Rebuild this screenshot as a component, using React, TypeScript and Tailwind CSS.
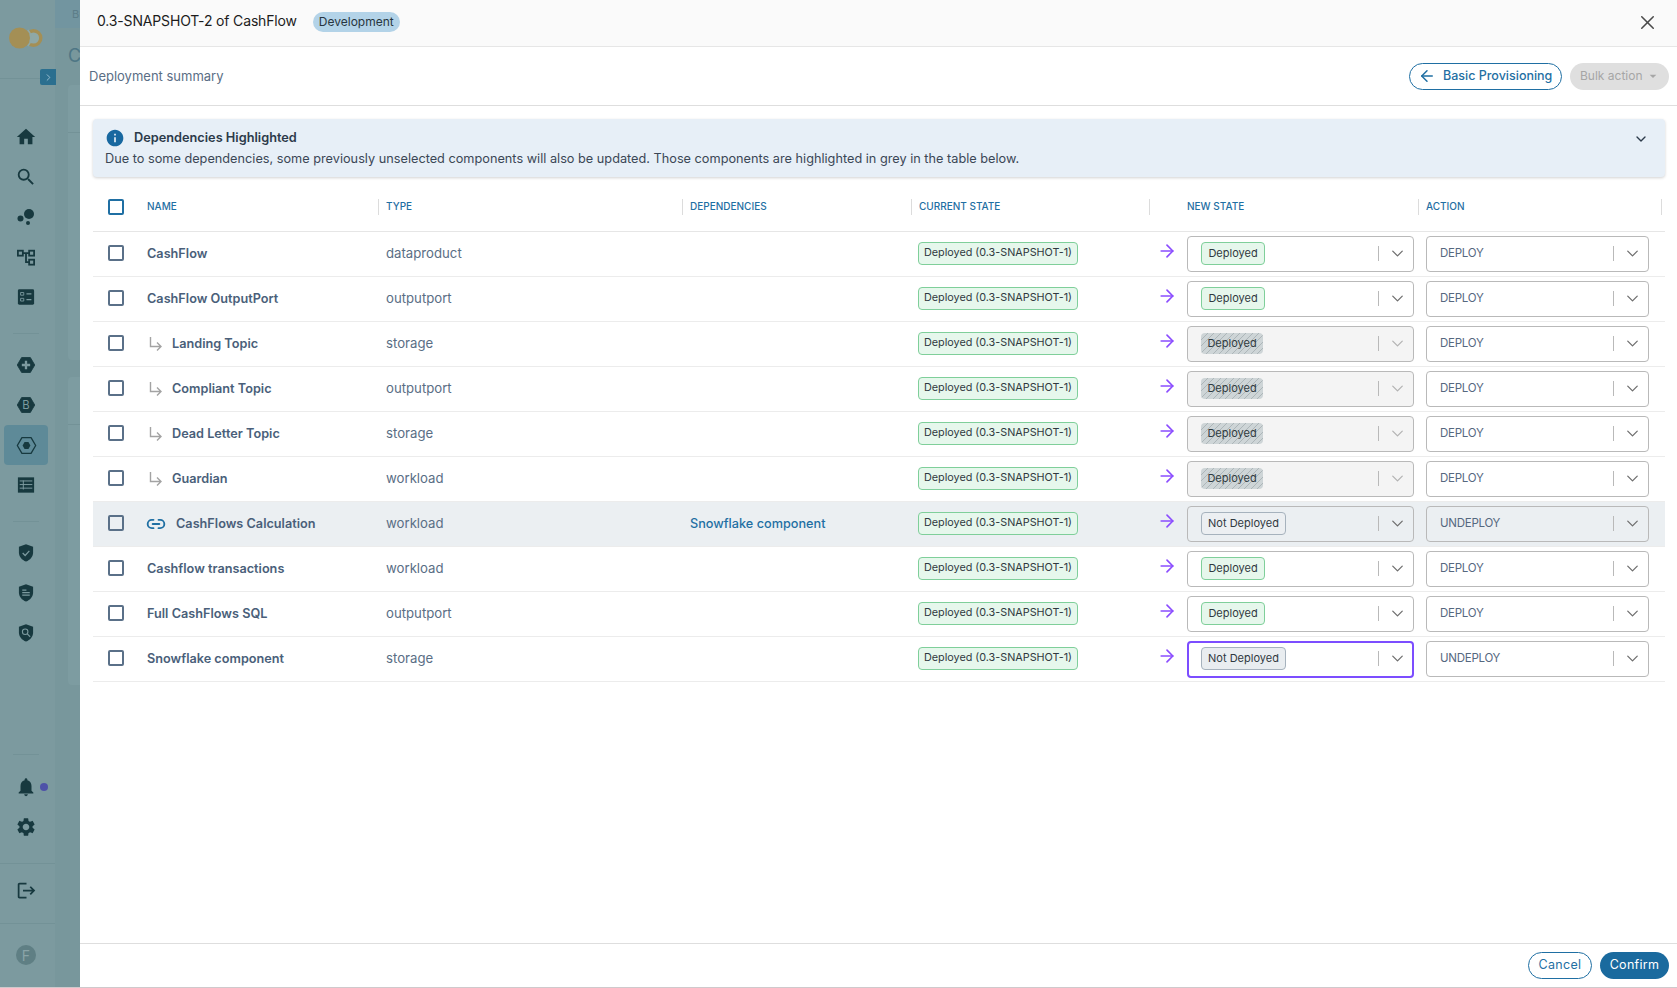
import React from "react";
import { ArrowLeft, ArrowRight, ChevronDown, ChevronRight, Link2, X } from "lucide-react";
import { MdHome, MdSearch, MdNotifications, MdSettings, MdLogout, MdInfo, MdArrowDropDown } from "react-icons/md";

type Row = { name: string; type: string; sub?: boolean; link?: boolean; dep?: string; state: "Deployed" | "Not Deployed"; action: string; locked?: boolean; hl?: boolean; focus?: boolean };

const rows: Row[] = [
  { name: "CashFlow", type: "dataproduct", state: "Deployed", action: "DEPLOY" },
  { name: "CashFlow OutputPort", type: "outputport", state: "Deployed", action: "DEPLOY" },
  { name: "Landing Topic", type: "storage", sub: true, state: "Deployed", action: "DEPLOY", locked: true },
  { name: "Compliant Topic", type: "outputport", sub: true, state: "Deployed", action: "DEPLOY", locked: true },
  { name: "Dead Letter Topic", type: "storage", sub: true, state: "Deployed", action: "DEPLOY", locked: true },
  { name: "Guardian", type: "workload", sub: true, state: "Deployed", action: "DEPLOY", locked: true },
  { name: "CashFlows Calculation", type: "workload", link: true, dep: "Snowflake component", state: "Not Deployed", action: "UNDEPLOY", hl: true },
  { name: "Cashflow transactions", type: "workload", state: "Deployed", action: "DEPLOY" },
  { name: "Full CashFlows SQL", type: "outputport", state: "Deployed", action: "DEPLOY" },
  { name: "Snowflake component", type: "storage", state: "Not Deployed", action: "UNDEPLOY", focus: true },
];

const ink = "#17393f";
const side = "#7c9a9f";
const hex = "1.500,12 6.800,3 17.200,3 22.500,12 17.200,21 6.800,21";

function Hex({ children }: { children?: React.ReactNode }) {
  return (
    <svg viewBox="0 0 24 24" className="w-[20px] h-[20px]">
      <polygon points={hex} fill={ink} stroke={ink} strokeLinejoin="round" />
      {children}
    </svg>
  );
}

function Shield({ children }: { children?: React.ReactNode }) {
  return (
    <svg viewBox="0 0 24 24" className="w-[20px] h-[20px]">
      <path d="M12 1.500 3.500 4.500v7c0 5 3.600 9.200 8.500 10.800 4.900-1.600 8.500-5.800 8.500-10.800v-7z" fill={ink} />
      {children}
    </svg>
  );
}

function NavIcon({ children, active }: { children: React.ReactNode; active?: boolean }) {
  return <div className={`w-[44px] h-[40px] rounded flex items-center justify-center ${active ? "bg-[#5e8a98]" : ""}`}>{children}</div>;
}

function Sidebar() {
  const s = { color: ink };
  return (
    <aside className="w-[55px] shrink-0 h-full bg-[#7c9a9f] flex flex-col items-center pr-[3px] relative">
      <div className="h-[78px] w-full flex items-start justify-center pt-[26px]">
        <svg viewBox="0 0 34 24" className="w-[34px] h-[24px]">
          <circle cx="24.500" cy="12" r="7.300" fill="#8fa8a6" stroke="#a48f55" strokeWidth="3.400" />
          <circle cx="10.500" cy="12" r="10.500" fill="#a48f55" />
          <path d="M18.800 4a11.500 11.500 0 0 1 0 16" fill="none" stroke="#8fa8a6" strokeWidth="1.400" />
        </svg>
      </div>
      <div className="absolute left-0 top-[78px] w-[40px] h-px bg-[#739297]" />
      <div className="absolute left-[40px] top-[69px] w-[16px] h-[16px] rounded-l-[2px] bg-[#2b6f8f] flex items-center justify-center">
        <ChevronRight size={11} color="#9fc3d3" />
      </div>
      <div className="mt-[39px] flex flex-col items-center">
        <NavIcon><MdHome size={22} style={s} /></NavIcon>
        <NavIcon><MdSearch size={22} style={s} /></NavIcon>
        <NavIcon>
          <svg viewBox="0 0 20 20" className="w-[20px] h-[20px]"><circle cx="13" cy="7" r="5" fill={ink} /><circle cx="4.500" cy="11.500" r="3" fill={ink} /><circle cx="12" cy="16" r="2" fill={ink} /></svg>
        </NavIcon>
        <NavIcon>
          <svg viewBox="0 0 20 20" className="w-[18px] h-[18px]" fill="none" stroke={ink} strokeWidth="2"><rect x="1" y="3" width="5.500" height="5.500" /><rect x="13.500" y="3" width="5.500" height="5.500" /><rect x="13.500" y="13" width="5.500" height="5.500" /><path d="M6.500 5.750h7M10 5.750v10h3.500" /></svg>
        </NavIcon>
        <NavIcon>
          <svg viewBox="0 0 20 20" className="w-[18px] h-[18px]">
            <rect x="1" y="1.500" width="18" height="17" rx="1.500" fill={ink} />
            <path d="M4 5h3.500v3H4zM4 11.500h3.500v3H4z" fill="none" stroke={side} strokeWidth="1" />
            <path d="M10.500 6.500h5.500M10.500 13h5.500" stroke={side} strokeWidth="1.300" />
          </svg>
        </NavIcon>
      </div>
      <div className="w-[26px] h-px bg-[#739297] mt-[16px] mb-[11px]" />
      <div className="flex flex-col items-center">
        <NavIcon><Hex><path d="M12 7v10M7 12h10" stroke={side} strokeWidth="2.800" /></Hex></NavIcon>
        <NavIcon><Hex><text x="12" y="16.800" textAnchor="middle" fontSize="13.500" fontFamily="Inter, sans-serif" fill={side}>B</text></Hex></NavIcon>
        <NavIcon active>
          <svg viewBox="0 0 24 24" className="w-[21px] h-[21px]">
            <polygon points={hex} fill="none" stroke={ink} strokeWidth="1.500" strokeLinejoin="round" />
            <polygon points="7.500,12 9.800,8 14.200,8 16.500,12 14.200,16 9.800,16" fill={ink} />
          </svg>
        </NavIcon>
        <NavIcon>
          <svg viewBox="0 0 20 20" className="w-[18px] h-[18px]"><rect x="1" y="1.500" width="18" height="17" fill={ink} /><path d="M3 5.500h14M3 9.500h14M3 13.500h14M7 5v10" stroke={side} strokeWidth="1.100" fill="none" /></svg>
        </NavIcon>
      </div>
      <div className="w-[26px] h-px bg-[#739297] mt-[16px] mb-[11px]" />
      <div className="flex flex-col items-center">
        <NavIcon><Shield><path d="M8 12l3 3 5-5.500" fill="none" stroke={side} strokeWidth="1.500" /></Shield></NavIcon>
        <NavIcon><Shield><path d="M7.500 8.500h5M7.500 11.500h9M7.500 14.500h9" stroke={side} strokeWidth="1.300" /></Shield></NavIcon>
        <NavIcon><Shield><circle cx="11" cy="10.500" r="3.300" fill="none" stroke={side} strokeWidth="1.300" /><path d="M13.500 13l3.500 3.500" stroke={side} strokeWidth="1.300" /></Shield></NavIcon>
      </div>
      <div className="flex-1" />
      <div className="w-[26px] h-px bg-[#739297] mb-[12px]" />
      <div className="flex flex-col items-center relative">
        <NavIcon><MdNotifications size={22} style={s} /></NavIcon>
        <span className="absolute left-[36px] top-[16px] w-[8px] h-[8px] rounded-full bg-[#4e52a8]" />
        <NavIcon><MdSettings size={22} style={s} /></NavIcon>
      </div>
      <div className="w-[55px] -mr-[3px] border-t border-[#739297] mt-[16px] h-[60px] flex items-center justify-center pr-[3px] pb-[7px]">
        <MdLogout size={21} style={s} />
      </div>
      <div className="w-[55px] -mr-[3px] border-t border-[#739297] h-[65px] flex items-start justify-center pr-[3px] pt-[21px]">
        <div className="w-[20px] h-[20px] rounded-full bg-[#5f7f84] text-[#8aa4a8] text-[14px] flex items-center justify-center">F</div>
      </div>
    </aside>
  );
}

function Backdrop() {
  return (
    <div className="flex-1 h-full bg-[#78979c] flex flex-col">
      <div className="h-[28px] bg-[#7295a0] pl-[17px] text-[#5c7d88] text-[11px] flex items-center">Bu</div>
      <div className="pl-[13px] pt-[14px] h-[57px] text-[#4e7685] text-[18px]">C</div>
      <div className="ml-[13px] h-[275px] rounded-[4px] bg-[#7d9ca1]"><div className="h-[48px] border-b border-[#739297]" /></div>
      <div className="ml-[13px] mt-[17px] h-[308px] rounded-[4px] bg-[#7d9ca1]"><div className="h-[48px] border-b border-[#739297]" /></div>
    </div>
  );
}

function Chip({ state, locked, focus }: { state: string; locked?: boolean; focus?: boolean }) {
  if (locked)
    return (
      <span className="h-[21px] w-[62px] rounded-[4px] flex items-center justify-center text-[11px] text-[#2f3a40] bg-[repeating-linear-gradient(-45deg,#ced5d7,#ced5d7_3.800px,#adb6b9_3.800px,#adb6b9_4.500px)]">
        {state}
      </span>
    );
  const cls =
    state === "Deployed"
      ? "w-[64px] bg-[#e6f7ec] border-[#7fcf9a]"
      : focus
        ? "w-[85px] bg-[#e9edf0] border-[#a6b2bd]"
        : "w-[85px] bg-[#eceff2] border-[#a6b2bd]";
  return <span className={`h-[23px] rounded-[4px] border flex items-center justify-center text-[11px] text-[#30393f] ${cls}`}>{state}</span>;
}

function StateSelect({ r }: { r: Row }) {
  const border = r.focus ? "border-2 border-[#7c4dff]" : "border border-[#b9b9b9]";
  const bg = r.locked ? "bg-[#f4f4f4]" : r.hl ? "bg-[#ebeff2]" : "bg-white";
  return (
    <div className={`w-[227px] rounded-[4px] flex items-center pb-[2px] ${r.focus ? "h-[37px] pl-[12px] pr-[5px]" : "h-[36px] pl-[13px] pr-[6px]"} ${border} ${bg}`}>
      <Chip state={r.state} locked={r.locked} focus={r.focus} />
      <div className="flex-1" />
      <span className="w-px h-[15px] bg-[#b9b9b9]" />
      <ChevronDown size={19} strokeWidth={1.600} color={r.locked ? "#b3b3b3" : "#6e6e6e"} className="ml-[9px]" />
    </div>
  );
}

function ActionSelect({ r }: { r: Row }) {
  return (
    <div className={`w-[223px] h-[36px] rounded-[4px] border border-[#b9b9b9] flex items-center pb-[2px] pl-[13px] pr-[6px] ${r.hl ? "bg-[#ebeff2]" : "bg-white"}`}>
      <span className="text-[11.500px] tracking-[-0.25px] text-[#56687f] mt-[2px]">{r.action}</span>
      <div className="flex-1" />
      <span className="w-px h-[15px] bg-[#b9b9b9]" />
      <ChevronDown size={19} strokeWidth={1.600} color="#6e6e6e" className="ml-[9px]" />
    </div>
  );
}

function CheckBox({ head }: { head?: boolean }) {
  return <span className={`block w-[16px] h-[16px] rounded-[2px] border-2 ${head ? "border-[#1f6fa3]" : "border-[#5a7088]"}`} />;
}

const grid = "grid grid-cols-[46px_239px_304px_229px_238px_30px_239px_247px]";

function HeadCell({ label, className = "" }: { label: string; className?: string }) {
  return (
    <div className={`flex items-center justify-between pl-2 pt-[5px] ${className}`}>
      <span className="text-[10px] font-medium text-[#1f6fa3]">{label}</span>
      <span className="w-px h-[16px] -mr-px bg-[#dcdcdc]" />
    </div>
  );
}

export default function App() {
  return (
    <div className="w-[1677px] h-[988px] relative overflow-hidden flex bg-white font-['Inter','Noto_Sans',sans-serif]">
      <Sidebar />
      <Backdrop />
      <div className="absolute left-[80px] top-0 right-0 h-[987px] bg-white flex flex-col">
        <header className="h-[47px] shrink-0 bg-[#fafafa] border-b border-[#e6e6e6] flex items-center pl-[17px] pr-[18px] pb-[2px]">
          <h1 className="text-[14px] text-[#1c1c1c] tracking-[-0.16px] mb-[3px]">0.3-SNAPSHOT-2 of CashFlow</h1>
          <span className="ml-[16px] h-[20px] px-[6px] rounded-full bg-[#b3d3e8] text-[12px] text-[#27353f] flex items-center">Development</span>
          <div className="flex-1" />
          <X size={23} color="#4a4a4a" strokeWidth={1.600} />
        </header>
        <div className="h-[59px] shrink-0 border-b border-[#dedede] flex items-center pl-[9px] pr-[8px]">
          <span className="text-[13px] text-[#5a6e85] mt-[2px]">Deployment summary</span>
          <div className="flex-1" />
          <button className="h-[27px] w-[153px] rounded-full border border-[#1f6fa3] flex items-center pl-[8px] text-[12.500px] font-medium text-[#1f6fa3] gap-[7px]">
            <ArrowLeft size={18} strokeWidth={2} />
            Basic Provisioning
          </button>
          <button className="ml-[8px] h-[27px] w-[99px] rounded-full bg-[#dfdfdf] flex items-center pl-[10px] text-[12px] text-[#a6a6a6]">
            Bulk action
            <MdArrowDropDown size={16} className="ml-[2px]" />
          </button>
        </div>
        <main className="flex-1 pl-[13px] pr-[12px] pt-[13px] flex flex-col">
          <section className="h-[58px] shrink-0 rounded-[4px] bg-[#e7eff7] shadow-[0_1px_3px_rgba(0,0,0,0.18)] pl-[12px] pr-[18px] pt-[9px] relative">
            <div className="flex items-center gap-[9px] h-[20px]">
              <MdInfo size={20} color="#1868a0" />
              <span className="text-[12.750px] font-semibold text-[#2c3a4a]">Dependencies Highlighted</span>
            </div>
            <p className="text-[12.720px] text-[#3b4756] mt-[1px]">Due to some dependencies, some previously unselected components will also be updated. Those components are highlighted in grey in the table below.</p>
            <ChevronDown size={16} color="#2c3a4a" className="absolute right-[16px] top-[12px]" />
          </section>
          <div className={`${grid} h-[55px] border-b border-[#e6e6e6]`}>
            <div className="flex items-center pl-[15px] pt-[5px]"><CheckBox head /></div>
            <HeadCell label="NAME" />
            <HeadCell label="TYPE" />
            <HeadCell label="DEPENDENCIES" />
            <HeadCell label="CURRENT STATE" />
            <div />
            <HeadCell label="NEW STATE" />
            <HeadCell label="ACTION" className="pr-[4px]" />
          </div>
          {rows.map((r) => (
            <div key={r.name} className={`${grid} h-[45px] border-b border-[#ececec] items-center ${r.hl ? "bg-[#ebeff2]" : ""}`}>
              <div className="pl-[15px] pb-[2px]"><CheckBox /></div>
              <div className="pl-2 flex items-center text-[12.700px] font-semibold text-[#4a5f7a]">
                {r.sub && (
                  <svg viewBox="0 0 13 15" className="w-[13px] h-[15px] ml-[2px] mr-[10px]" fill="none" stroke="#a3a3a3" strokeWidth="1.400">
                    <path d="M1.500 1v9.500H12M8 6.500l4 4-4 4" />
                  </svg>
                )}
                {r.link && <Link2 size={20} color="#1f6fa3" strokeWidth={2.200} className="mr-[10px] -ml-[1px]" />}
                {r.name}
              </div>
              <div className="pl-2 text-[13.200px] text-[#5a6e85]">{r.type}</div>
              <div className="pl-2 text-[12.700px] font-medium text-[#1f6fa3]">{r.dep}</div>
              <div className="pl-[7px] pb-[2px]">
                <span className="h-[23px] w-[160px] rounded-[4px] border border-[#7fcf9a] bg-[#e6f7ec] text-[10.800px] text-[#30393f] flex items-center justify-center">Deployed (0.3-SNAPSHOT-1)</span>
              </div>
              <div className="flex justify-center pl-[5px] pb-[6px]"><ArrowRight size={20} color="#8b4dff" strokeWidth={2} /></div>
              <div className="pl-2"><StateSelect r={r} /></div>
              <div className="pl-2"><ActionSelect r={r} /></div>
            </div>
          ))}
        </main>
        <footer className="h-[44px] shrink-0 border-t border-[#dedede] flex items-center justify-end gap-[8px] pr-[8px]">
          <button className="h-[27px] w-[64px] rounded-full border border-[#1f6fa3] text-[12.500px] text-[#1f6fa3] tracking-[0.3px]">Cancel</button>
          <button className="h-[27px] w-[69px] rounded-full bg-[#1a6a9e] text-[12.500px] text-white tracking-[0.3px]">Confirm</button>
        </footer>
      </div>
      <div className="absolute left-0 right-0 bottom-0 h-px bg-[#cfc9cc]" />
    </div>
  );
}
